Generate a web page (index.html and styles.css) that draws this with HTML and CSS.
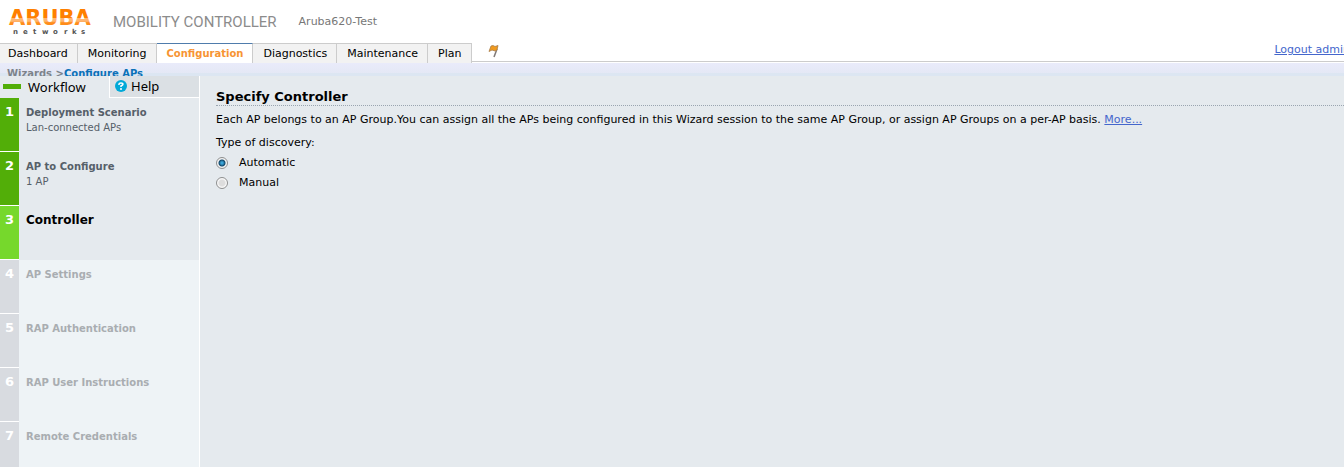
FILE: index.html
```html
<!DOCTYPE html>
<html lang="en">
<head>
  <meta charset="UTF-8" />
  <meta name="viewport" content="width=device-width, initial-scale=1" />
  <title>Mobility Controller - Configure APs</title>
  <link rel="stylesheet" href="styles.css">
</head>
<body>
  <header class="masthead">
    <svg class="logo" width="82" height="28" viewBox="0 0 82 28" role="img" aria-label="Aruba networks">
      <defs>
        <linearGradient id="logoFill" gradientUnits="userSpaceOnUse" x1="0" y1="2" x2="0" y2="17">
          <stop offset="0.5" stop-color="#ff7f00" />
          <stop offset="0.55" stop-color="#ffb570" />
          <stop offset="0.75" stop-color="#ffb570" />
          <stop offset="0.85" stop-color="#ff8c1a" />
        </linearGradient>
      </defs>
      <text class="logo-name" x="0" y="17" fill="url(#logoFill)">ARUBA</text>
      <text class="logo-sub" x="4 14 24 33 44 55 63 72" y="26">networks</text>
    </svg>
    <h1>MOBILITY CONTROLLER</h1>
    <span class="host">Aruba620-Test</span>
  </header>

  <nav class="tabs">
    <a href="#">Dashboard</a>
    <a href="#">Monitoring</a>
    <a href="#" class="active">Configuration</a>
    <a href="#">Diagnostics</a>
    <a href="#">Maintenance</a>
    <a href="#">Plan</a>
    <svg class="flag" width="12" height="14" viewBox="0 0 12 14" aria-hidden="true">
      <path d="M9 5 L6 13" stroke="#807a78" stroke-width="1.5" />
      <path d="M3 2 L5 1.5 L7 2.5 L10 1.5 L9 6 L7 7 L4 6 L1 7.5 Z" fill="#f09a1e" stroke="#a87c48" stroke-width="0.8" />
    </svg>
    <a href="#" class="logout">Logout admin</a>
  </nav>

  <div class="breadcrumb">Wizards &gt;<a href="#">Configure APs</a></div>

  <div class="wizard">
    <aside class="sidebar">
      <div class="side-tabs">
        <button type="button" class="side-tab current"><span class="bar"></span>Workflow</button>
        <button type="button" class="side-tab help">
          <svg width="12" height="12" viewBox="0 0 12 12" aria-hidden="true">
            <circle cx="6" cy="6" r="6" fill="#00a9d8" />
            <path d="M4 5 V4 Q4 3 6 3 Q8 3 8 4 Q8 5 6 6 V7 M6 8 V10" fill="none" stroke="#fff" stroke-width="1.5" />
          </svg>Help
        </button>
      </div>
      <ol class="steps">
        <li class="done"><span class="num">1</span><div><b>Deployment Scenario</b><small>Lan-connected APs</small></div></li>
        <li class="done"><span class="num">2</span><div><b>AP to Configure</b><small>1 AP</small></div></li>
        <li class="now"><span class="num">3</span><div><b>Controller</b></div></li>
        <li><span class="num">4</span><div><b>AP Settings</b></div></li>
        <li><span class="num">5</span><div><b>RAP Authentication</b></div></li>
        <li><span class="num">6</span><div><b>RAP User Instructions</b></div></li>
        <li><span class="num">7</span><div><b>Remote Credentials</b></div></li>
      </ol>
    </aside>

    <main>
      <h2>Specify Controller</h2>
      <p>Each AP belongs to an AP Group.You can assign all the APs being configured in this Wizard session to the same AP Group, or assign AP Groups on a per-AP basis. <a href="#">More...</a></p>
      <p id="discovery">Type of discovery:</p>
      <div class="options" role="radiogroup" aria-labelledby="discovery">
        <label><input type="radio" name="discovery" checked>Automatic</label>
        <label><input type="radio" name="discovery">Manual</label>
      </div>
    </main>
  </div>
</body>
</html>
```

FILE: styles.css
```css
* { box-sizing: border-box; }

html, body { height: 100%; }

body {
  display: flex;
  flex-direction: column;
  margin: 0;
  overflow: hidden;
  background: #fff;
  color: #000;
  font: 11px/14px Verdana, "DejaVu Sans", sans-serif;
}

a { color: #4466cc; }

/* header */
.masthead {
  display: flex;
  flex: none;
  align-items: center;
  height: 43px;
  padding-left: 9px;
}

.logo { overflow: visible; }

.logo-name {
  font: bold 21px "DejaVu Sans", sans-serif;
}

.logo-sub {
  font: bold 7px "DejaVu Sans", sans-serif;
  fill: #555;
}

.masthead h1 {
  margin: 0 22px;
  color: #8c8c8c;
  font: 15px/20px Roboto, Arial, sans-serif;
}

.host { color: #777; }

/* main tabs */
.tabs {
  display: flex;
  flex: none;
  height: 20px;
  background: linear-gradient(#ccc, #ccc) 0 18px / 100% 1px no-repeat;
}

.tabs a:not(.logout) {
  padding: 3px 9px 0 10px;
  border-top: 1px solid #ccc;
  border-right: 1px solid #ccc;
  background: #f2f2f2;
  color: #000;
  text-decoration: none;
}

.tabs a:not(.logout):first-child { padding-left: 8px; }

.tabs a.active:not(.logout) {
  border-top-color: #4f7cac;
  background: #fff;
  color: #f79433;
  font-size: 10px;
  font-weight: bold;
}

.flag { margin: 1px 0 0 16px; }

.logout {
  flex: none;
  margin-left: auto;
  margin-right: -6px;
  white-space: nowrap;
}

.breadcrumb {
  flex: none;
  height: 13px;
  padding: 4px 7px 0;
  overflow: hidden;
  background: linear-gradient(#e9ebfa, #e4e8f5 80%, #dce6f2 80%);
  color: #7d838a;
  font-size: 10px;
  font-weight: bold;
}

.breadcrumb a { color: #0b71b8; }

/* wizard */
.wizard {
  display: flex;
  flex: 1;
  min-height: 0;
  background: #e5eaee;
}

.sidebar {
  flex: none;
  width: 200px;
  overflow: hidden;
  border-right: 1px solid #fff;
}

.side-tabs {
  display: flex;
  height: 22px;
}

.side-tab {
  display: flex;
  align-items: center;
  padding: 0 0 1px;
  border: 0;
  background: none;
  color: #000;
  font: 13px/16px "Noto Sans", Tahoma, sans-serif;
}

.side-tab.current {
  width: 109px;
  padding-left: 3px;
}

.bar {
  width: 18px;
  height: 5px;
  margin-right: 7px;
  background: #52ae08;
}

.side-tab.help {
  flex: 1;
  gap: 4px;
  padding-left: 5px;
  border: solid #fff;
  border-width: 0 0 1px 1px;
  background: #dbe0e4;
}

.steps {
  margin: 0;
  padding: 0;
  list-style: none;
}

.steps li {
  display: flex;
  height: 54px;
  background: #eef3f6;
  color: #a9adb1;
}

.steps li.done,
.steps li.now {
  background: #e5eaee;
}

.steps li.done { color: #566069; }
.steps li.now { color: #000; }
.steps li.now b { font-size: 12px; }

.num {
  width: 19px;
  padding-top: 7px;
  border-bottom: 1px solid #fff;
  background: #d8dbe0;
  color: #fff;
  font-size: 13px;
  font-weight: bold;
  text-align: center;
}

.done .num { background: #52ae08; }
.now .num { background: #76d82c; }

.steps div { padding: 7px 7px 0; }

.steps b,
.steps small {
  display: block;
  font-size: 10px;
  line-height: 15px;
}

main {
  flex: 1;
  min-width: 0;
  padding: 13px 0 0 16px;
}

main h2 {
  margin: 0 0 7px;
  border-bottom: 1px dotted #9aa5b0;
  font-size: 13px;
  line-height: 16px;
}

main p {
  margin: 0;
  white-space: nowrap;
}

main p + p { margin-top: 9px; }

.options { margin-top: 3px; }

.options label {
  display: flex;
  align-items: center;
  height: 20px;
}

.options input {
  appearance: none;
  width: 12px;
  height: 12px;
  margin: 0 11px 0 0;
  border: 1px solid #8e8f8f;
  border-radius: 50%;
  background: radial-gradient(#ddd 40%, #f8f8f8 60%);
}

.options input:checked {
  background: radial-gradient(circle, #3ba5d8 0 1px, #12486b 3px, #f4f4f4 4px);
}
```
